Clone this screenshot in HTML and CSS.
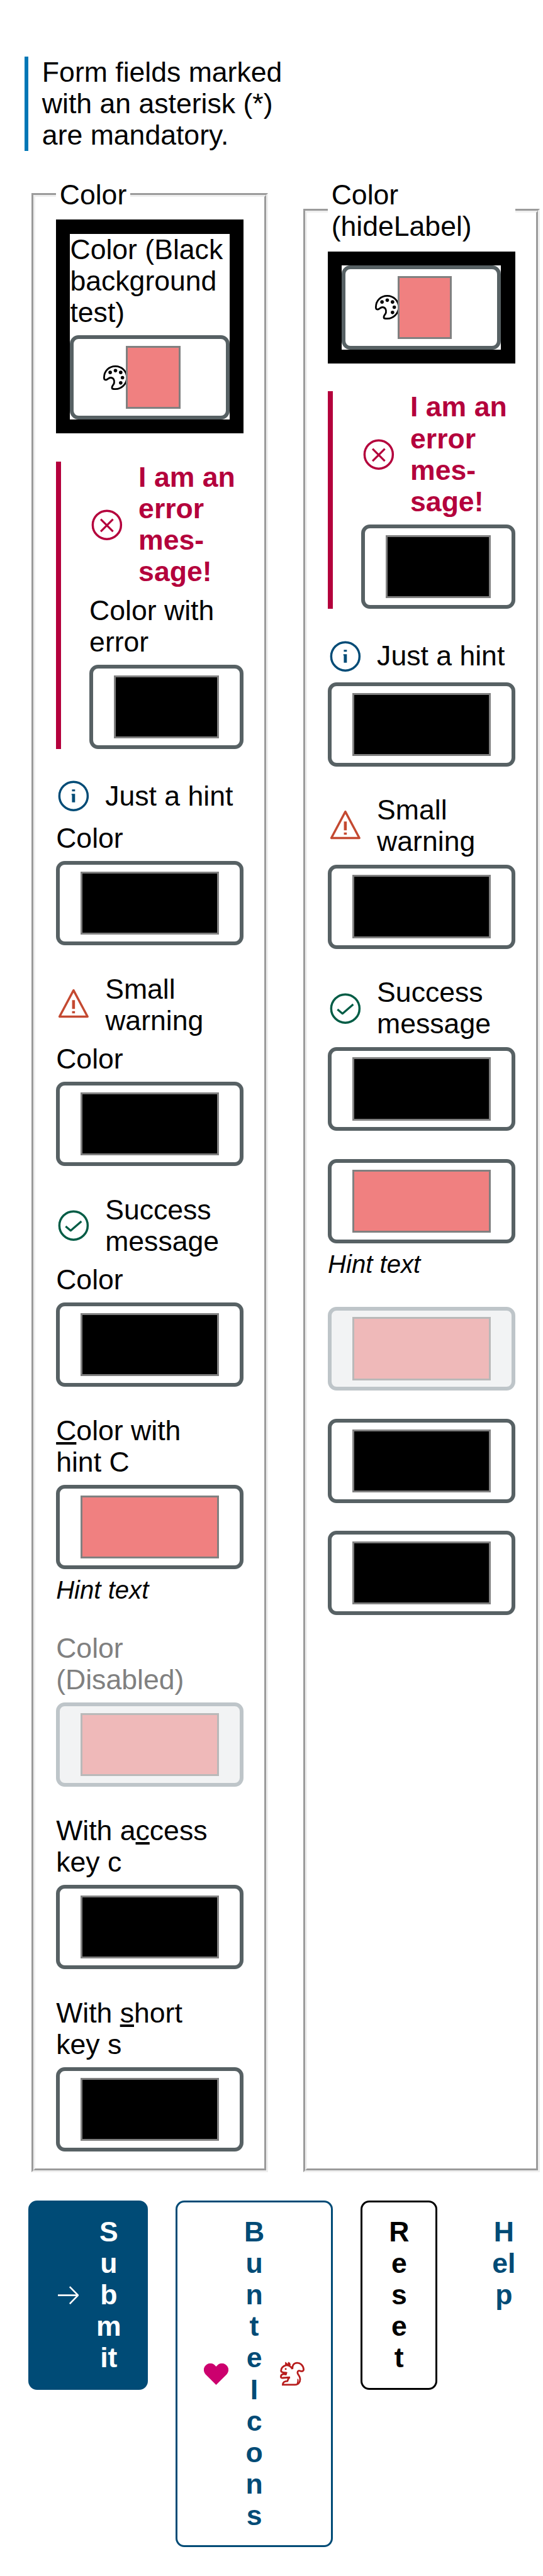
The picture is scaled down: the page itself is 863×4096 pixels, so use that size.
FILE: index.html
```html
<!DOCTYPE html>
<html lang="en">
<head>
<meta charset="utf-8">
<title>Color inputs</title>
<link rel="stylesheet" href="styles.css">
</head>
<body>
<svg class="sprite" aria-hidden="true">
  <symbol id="i-error" viewBox="0 0 80 88"><circle cx="40" cy="44" r="32.3" fill="none" stroke="currentColor" stroke-width="5"/><path d="M26 31L54 59M54 31L26 59" fill="none" stroke="currentColor" stroke-width="4.6"/></symbol>
  <symbol id="i-info" viewBox="0 0 80 88"><circle cx="40" cy="44" r="32.3" fill="none" stroke="currentColor" stroke-width="5"/><path d="M36.5 29H43.5V33.500H36.500zM35.500 39H43.500V58.500H36.500V42H35.500z" fill="currentColor"/></symbol>
  <symbol id="i-warn" viewBox="0 0 80 88"><path d="M40 14L8 74H72z" transform="translate(0 -3)" fill="none" stroke="currentColor" stroke-width="5" stroke-linejoin="round"/><path d="M36.700 33.500H43.300V53.500H36.700zM36.700 58.500H43.300V63.500H36.700z" fill="currentColor"/></symbol>
  <symbol id="i-ok" viewBox="0 0 80 88"><circle cx="40" cy="44" r="32.300" fill="none" stroke="currentColor" stroke-width="5"/><path d="M22 46L33.500 55.500L58 34.500" fill="none" stroke="currentColor" stroke-width="4.600" stroke-linejoin="round"/></symbol>
  <symbol id="i-palette" viewBox="0 0 56 56"><path d="M28 2C13 2 2 13 2 28C2 32 3 33 6 33C10 33 12 28 17 28C23 28 26 33 25 40C24 45 20 46 20 51C20 54 23 54 28 54C42 54 54 42 54 28C54 13 42 2 28 2z" fill="none" stroke="currentColor" stroke-width="4"/><g fill="currentColor"><circle cx="16" cy="16" r="4"/><circle cx="28" cy="12" r="4"/><circle cx="40" cy="16" r="4"/><circle cx="44" cy="28" r="4"/><circle cx="40" cy="40" r="4"/></g></symbol>
</svg>
<main class="page">
  <p class="notice">Form fields marked with an asterisk (*) are mandatory.</p>
  <div class="columns">
    <fieldset class="group">
      <legend>Color</legend>
      <div class="field dark"><div class="dark-inner">
        <span class="label">Color (Black background test)</span>
        <div class="input iconed"><svg class="palette"><use href="#i-palette"/></svg><i class="swatch coral"></i></div>
      </div></div>
      <div class="field invalid">
        <div class="msg error"><svg class="ico"><use href="#i-error"/></svg><span>I am an error mes&shy;sage!</span></div>
        <span class="label">Color with error</span>
        <div class="input"><i class="swatch"></i></div>
      </div>
      <div class="field">
        <div class="msg info"><svg class="ico"><use href="#i-info"/></svg><span>Just a hint</span></div>
        <span class="label">Color</span>
        <div class="input"><i class="swatch"></i></div>
      </div>
      <div class="field">
        <div class="msg warn"><svg class="ico"><use href="#i-warn"/></svg><span>Small warning</span></div>
        <span class="label">Color</span>
        <div class="input"><i class="swatch"></i></div>
      </div>
      <div class="field">
        <div class="msg ok"><svg class="ico"><use href="#i-ok"/></svg><span>Success message</span></div>
        <span class="label">Color</span>
        <div class="input"><i class="swatch"></i></div>
      </div>
      <div class="field">
        <span class="label"><u>C</u>olor with hint&nbsp;C</span>
        <div class="input"><i class="swatch coral"></i></div>
        <span class="hint">Hint text</span>
      </div>
      <div class="field disabled">
        <span class="label">Color (Disabled)</span>
        <div class="input"><i class="swatch coral"></i></div>
      </div>
      <div class="field">
        <span class="label">With a<u>c</u>cess key&nbsp;c</span>
        <div class="input"><i class="swatch"></i></div>
      </div>
      <div class="field">
        <span class="label">With <u>s</u>hort key&nbsp;s</span>
        <div class="input"><i class="swatch"></i></div>
      </div>
    </fieldset>
    <fieldset class="group">
      <legend>Color (hideLabel)</legend>
      <div class="field dark"><div class="dark-inner">
        <div class="input iconed"><svg class="palette"><use href="#i-palette"/></svg><i class="swatch coral"></i></div>
      </div></div>
      <div class="field invalid">
        <div class="msg error"><svg class="ico"><use href="#i-error"/></svg><span>I am an error mes&shy;sage!</span></div>
        <div class="input"><i class="swatch"></i></div>
      </div>
      <div class="field">
        <div class="msg info"><svg class="ico"><use href="#i-info"/></svg><span>Just a hint</span></div>
        <div class="input"><i class="swatch"></i></div>
      </div>
      <div class="field">
        <div class="msg warn"><svg class="ico"><use href="#i-warn"/></svg><span>Small warning</span></div>
        <div class="input"><i class="swatch"></i></div>
      </div>
      <div class="field">
        <div class="msg ok"><svg class="ico"><use href="#i-ok"/></svg><span>Success message</span></div>
        <div class="input"><i class="swatch"></i></div>
      </div>
      <div class="field">
        <div class="input"><i class="swatch coral"></i></div>
        <span class="hint">Hint text</span>
      </div>
      <div class="field disabled"><div class="input"><i class="swatch coral"></i></div></div>
      <div class="field"><div class="input"><i class="swatch"></i></div></div>
      <div class="field"><div class="input"><i class="swatch"></i></div></div>
    </fieldset>
  </div>
  <div class="actions">
    <div class="btn submit"><svg class="arrow" viewBox="0 0 48 42"><path d="M0 21H46M27 1.500L46 21L27 40.500" fill="none" stroke="currentColor" stroke-width="3.600" stroke-linejoin="round"/></svg><span>Submit</span></div>
    <div class="btn bunte">
      <svg class="heart" viewBox="0 0 56 49"><path d="M28 49L4 25C-1.500 19 -1.500 10 4 4.500C10 -1.500 19 -1.500 24.500 3.500L28 7L31.500 3.500C37 -1.500 46 -1.500 52 4.500C57.500 10 57.500 19 52 25z" fill="#cc006e"/></svg>
      <span>Bunte Icons</span>
      <svg class="squirrel" viewBox="777 336 168 168"><path d="M862 387C851 368 838 360 818 361C795 366 784 385 784 399C784 410 800 411 820 414L817 424L800 422C788 424 783 432 783 440C783 448 788 449 796 448L845 444C830 450 832 465 828 470C808 470 796 480 796 495H880C905 495 915 475 915 455C915 435 897 425 897 412C897 398 908 397 917 401C930 405 939 400 939 390C936 360 915 345 895 345C870 345 860 365 862 387z" fill="none" stroke="#b71c1c" stroke-width="12"/><path d="M812 338L823 345L829 352L833 338L846 345L851 362L812 364zM800 408H823L818 429L802 424zM896 452L904 460V485L890 490Q897 475 896 452z" fill="#b71c1c"/><circle cx="816" cy="387" r="6.500" fill="#b71c1c"/></svg>
    </div>
    <div class="btn reset"><span>Reset</span></div>
    <div class="btn help"><span>Help</span></div>
  </div>
</main>
</body>
</html>
```
FILE: styles.css
```css
html { font-size: 69.67px; }
* { box-sizing: border-box; }
body {
  margin: 0;
  background: #fff;
  color: #000;
  font-family: "Liberation Sans", Arial, sans-serif;
}
.sprite { position: absolute; width: 0; height: 0; }
.page {
  width: 863px;
  height: 4096px;
  overflow: hidden;
  padding-top: 1.285rem;
  font-size: .64rem;
  line-height: .72rem;
}
.notice {
  width: 6.1rem;
  margin: 0 0 .64rem .56rem;
  padding-left: calc(.4rem - 6px);
  border-left: 6px solid #0077b6;
}
.columns {
  display: grid;
  grid-template-columns: 5.4rem 5.39rem;
  gap: .8rem;
  margin-left: .72rem;
}
.group {
  min-width: 0;
  margin: 0;
  padding: .21rem calc(.56rem - 6px) calc(.48rem - 6px);
  border: 6px groove threedface;
}
.group legend { padding: 0 .08rem; }
.field {
  display: flex;
  flex-direction: column;
  gap: .16rem;
  margin-bottom: .64rem;
}
.field:last-child { margin-bottom: 0; }
.dark { padding: .32rem; background: #000; }
.dark-inner {
  display: flex;
  flex-direction: column;
  gap: .16rem;
  background: #fff;
}
.invalid {
  padding-left: calc(.76rem - 8px);
  border-left: 8px solid #b4003c;
}
.msg {
  display: flex;
  align-items: center;
  gap: .32rem;
  min-height: .88rem;
}
.msg span { min-width: 0; flex: 1; }
.ico { width: .8rem; height: .88rem; flex: none; }
.error { color: #b4003c; font-weight: 700; }
.info .ico { color: #004b76; }
.warn .ico { color: #c44931; }
.ok .ico { color: #005c45; }
.input {
  display: flex;
  height: 1.92rem;
  padding: calc(.24rem - 6px) calc(.56rem - 6px);
  border: 6px solid #576164;
  border-radius: .2rem;
  background: #fff;
}
.swatch {
  flex: 1;
  border: 3px solid #808080;
  background: #000;
}
.coral { background: #f08080; }
.iconed { align-items: center; }
.iconed .swatch {
  position: relative;
  align-self: stretch;
  margin: 0 0 0 -.05rem;
}
.input.iconed { padding-right: calc(1.12rem - 6px); }
.palette { width: .56rem; height: .56rem; margin-left: .2rem; flex: none; }
.hint {
  font-size: .576rem;
  line-height: .65rem;
  font-style: italic;
}
.disabled .label { color: #808080; }
.disabled .input { border-color: #bec5c9; background: #f2f3f4; }
.disabled .swatch { border-color: #b9b9b9; background: #efb9b9; }
.actions {
  display: flex;
  align-items: flex-start;
  gap: .64rem;
  margin: .64rem 0 0 .64rem;
  font-weight: 700;
}
.btn {
  display: flex;
  align-items: center;
  justify-content: center;
  flex: none;
  padding: calc(.36rem - 3px) 0;
  border: 3px solid transparent;
  border-radius: .2rem;
  color: #004b76;
  text-align: center;
}
.btn span { word-break: break-all; flex: none; width: .47rem; }
.submit {
  width: 2.73rem;
  justify-content: flex-start;
  padding-left: calc(.68rem - 3px);
  background: #004b76;
  border-color: #004b76;
  color: #fff;
}
.submit span { width: .58rem; }
.arrow { width: .48rem; height: .42rem; margin-right: .39rem; }
.bunte { width: 3.58rem; border-color: #004b76; gap: .355rem; }
.heart { width: .56rem; height: .49rem; }
.squirrel { width: .56rem; height: .56rem; }
.reset { width: 1.75rem; border-color: #000; color: #000; }
.help { width: 1.75rem; }
.help span { width: .54rem; }
```
